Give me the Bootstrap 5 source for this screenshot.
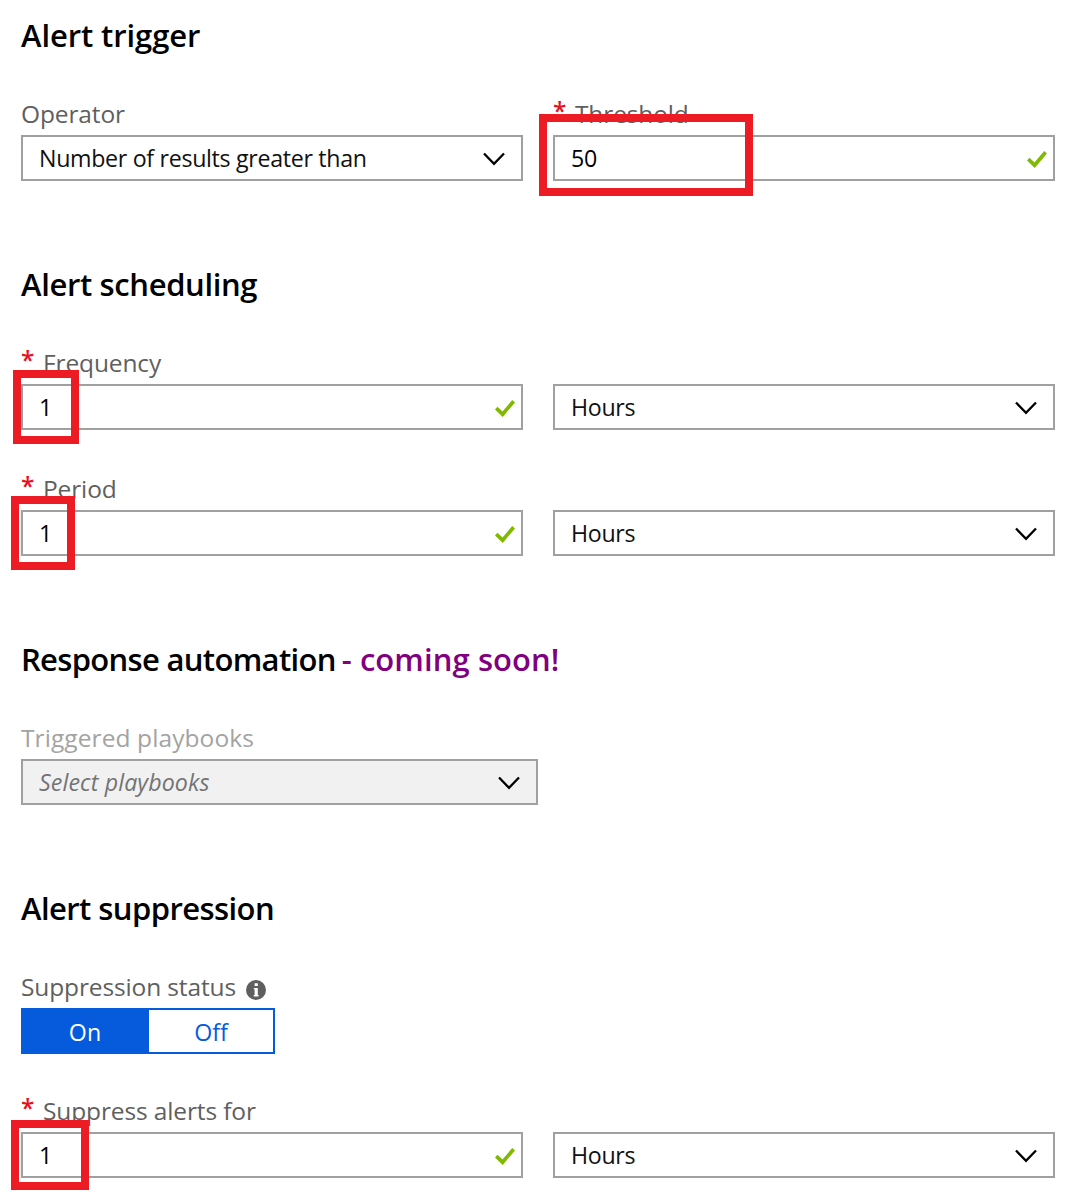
<!DOCTYPE html>
<html lang="en">
<head>
<meta charset="utf-8">
<meta name="viewport" content="width=device-width, initial-scale=1">
<title>Alert rule</title>
<link href="https://cdn.jsdelivr.net/npm/bootstrap@5.3.0/dist/css/bootstrap.min.css" rel="stylesheet">
<style>
  body { font-family: "Open Sans", "Noto Sans", sans-serif; color: #111; }
  .rule-form { width: 1055px; padding: 15px 0 21px 21px; }
  .rule-section { margin-bottom: 84px; }
  .rule-title { font-size: 31px; font-weight: 600; line-height: 40px; color: #000; margin: 0 0 42px; white-space: pre; }
  .rule-section + section .rule-title { margin-top: -1px; }
  .soon { color: #800080; letter-spacing: .08px; margin-left: 6px; }
  .t-trigger { letter-spacing: -.1px; }
  .t-sched { letter-spacing: -.36px; }
  .t-resp { letter-spacing: -.68px; }
  .t-supp { letter-spacing: -.57px; }
  .rule-fields { gap: 42px; }
  .rule-fields.tight { gap: 40px; }
  .field-pair { gap: 30px; }
  .field { width: 502px; }
  .field.wide { width: 517px; }
  .field-label { font-size: 24.5px; line-height: 33px; height: 33px; margin: 0 0 5px; color: #5f5f5f; letter-spacing: -.13px; white-space: nowrap; }
  .field-label.off { color: #a3a3a3; letter-spacing: .09px; }
  .req { width: 22px; color: #e81123; font-weight: 600; line-height: 27px; }
  .box { height: 46px; border: 2px solid #a0a0a0; border-radius: 0; padding: 0 16px; font-size: 23.2px; line-height: 42px; color: #111; background: #fff; letter-spacing: -.31px; }
  .box svg { margin-top: 2px; }
  input.box { padding: 0 16px 1px; color: #000; line-height: normal; letter-spacing: -.2px; }
  .box.off { background: #f1f1f1; color: #737373; font-style: italic; letter-spacing: .12px; }
  .tick { top: 16px; right: 8px; }
  .callout-mark { border: 8px solid #ed1c24; pointer-events: none; top: -14px; }
  .mark-threshold { left: -14px; top: -21px; width: 214px; height: 82px; }
  .mark-frequency { left: -8px; width: 66px; height: 74px; }
  .mark-period { left: -10px; width: 64px; height: 74px; }
  .mark-suppress { left: -10px; top: -12px; width: 78px; height: 70px; }
  .info-icon { margin: 6px 0 0 10px; }
  .status-switch { width: 254px; height: 46px; border: 2px solid #065bdd; font-size: 23.2px; line-height: 44px; }
  .status-switch .opt { width: 124px; color: #065bdd; }
  .status-switch .opt.on { width: 126px; padding-right: 2px; background: #065bdd; color: #fff; }
</style>
</head>
<body class="bg-white">
<main class="rule-form">

  <section class="rule-section">
    <h2 class="rule-title t-trigger">Alert trigger</h2>
    <div class="field-pair d-flex">
      <div class="field">
        <div class="field-label">Operator</div>
        <div class="box d-flex align-items-center justify-content-between" role="combobox">
          <span>Number of results greater than</span>
          <svg width="22" height="14" viewBox="0 0 22 14" fill="none" stroke="#000" stroke-width="2.3"><path d="M1 1.5 11 11.8 21 1.5"/></svg>
        </div>
      </div>
      <div class="field">
        <div class="field-label d-flex"><span class="req">*</span>Threshold</div>
        <div class="position-relative">
          <input class="box w-100 d-block" value="50" aria-label="Threshold">
          <svg class="tick position-absolute" width="20" height="17" viewBox="0 0 20 17" fill="none" stroke="#7fba00" stroke-width="3.7"><path d="M1.2 8.2 7.6 14.2 18.6 1.3"/></svg>
          <div class="callout-mark mark-threshold position-absolute"></div>
        </div>
      </div>
    </div>
  </section>

  <section class="rule-section">
    <h2 class="rule-title t-sched">Alert scheduling</h2>
    <div class="rule-fields d-flex flex-column">
      <div class="field-pair d-flex align-items-end">
        <div class="field">
          <div class="field-label d-flex"><span class="req">*</span>Frequency</div>
          <div class="position-relative">
            <input class="box w-100 d-block" value="1" aria-label="Frequency">
            <svg class="tick position-absolute" width="20" height="17" viewBox="0 0 20 17" fill="none" stroke="#7fba00" stroke-width="3.7"><path d="M1.2 8.2 7.6 14.2 18.6 1.3"/></svg>
            <div class="callout-mark mark-frequency position-absolute"></div>
          </div>
        </div>
        <div class="field box d-flex align-items-center justify-content-between" role="combobox">
          <span>Hours</span>
          <svg width="22" height="14" viewBox="0 0 22 14" fill="none" stroke="#000" stroke-width="2.3"><path d="M1 1.5 11 11.8 21 1.5"/></svg>
        </div>
      </div>
      <div class="field-pair d-flex align-items-end">
        <div class="field">
          <div class="field-label d-flex"><span class="req">*</span>Period</div>
          <div class="position-relative">
            <input class="box w-100 d-block" value="1" aria-label="Period">
            <svg class="tick position-absolute" width="20" height="17" viewBox="0 0 20 17" fill="none" stroke="#7fba00" stroke-width="3.7"><path d="M1.2 8.2 7.6 14.2 18.6 1.3"/></svg>
            <div class="callout-mark mark-period position-absolute"></div>
          </div>
        </div>
        <div class="field box d-flex align-items-center justify-content-between" role="combobox">
          <span>Hours</span>
          <svg width="22" height="14" viewBox="0 0 22 14" fill="none" stroke="#000" stroke-width="2.3"><path d="M1 1.5 11 11.8 21 1.5"/></svg>
        </div>
      </div>
    </div>
  </section>

  <section class="rule-section">
    <h2 class="rule-title t-resp d-flex">Response automation<span class="soon">- coming soon!</span></h2>
    <div class="field wide">
      <div class="field-label off">Triggered playbooks</div>
      <div class="box off d-flex align-items-center justify-content-between" role="combobox">
        <span>Select playbooks</span>
        <svg width="22" height="14" viewBox="0 0 22 14" fill="none" stroke="#000" stroke-width="2.3"><path d="M1 1.5 11 11.8 21 1.5"/></svg>
      </div>
    </div>
  </section>

  <section>
    <h2 class="rule-title t-supp">Alert suppression</h2>
    <div class="rule-fields tight d-flex flex-column">
      <div>
        <div class="field-label d-flex align-items-center">Suppression status
          <svg class="info-icon" width="20" height="20" viewBox="0 0 20 20"><circle cx="10" cy="10" r="10" fill="#5f5f5f"/><path fill="#fff" d="M8.6 3.3h3.2V6H8.6zM7.8 8h4v7h.8v1.4H7.8V15h.8V9.3h-.8z"/></svg>
        </div>
        <div class="status-switch d-flex text-center">
          <div class="opt on">On</div>
          <div class="opt">Off</div>
        </div>
      </div>
      <div class="field-pair d-flex align-items-end">
        <div class="field">
          <div class="field-label d-flex"><span class="req">*</span>Suppress alerts for</div>
          <div class="position-relative">
            <input class="box w-100 d-block" value="1" aria-label="Suppress alerts for">
            <svg class="tick position-absolute" width="20" height="17" viewBox="0 0 20 17" fill="none" stroke="#7fba00" stroke-width="3.7"><path d="M1.2 8.2 7.6 14.2 18.6 1.3"/></svg>
            <div class="callout-mark mark-suppress position-absolute"></div>
          </div>
        </div>
        <div class="field box d-flex align-items-center justify-content-between" role="combobox">
          <span>Hours</span>
          <svg width="22" height="14" viewBox="0 0 22 14" fill="none" stroke="#000" stroke-width="2.3"><path d="M1 1.5 11 11.8 21 1.5"/></svg>
        </div>
      </div>
    </div>
  </section>

</main>
<script src="https://cdn.jsdelivr.net/npm/bootstrap@5.3.0/dist/js/bootstrap.bundle.min.js"></script>
</body>
</html>
